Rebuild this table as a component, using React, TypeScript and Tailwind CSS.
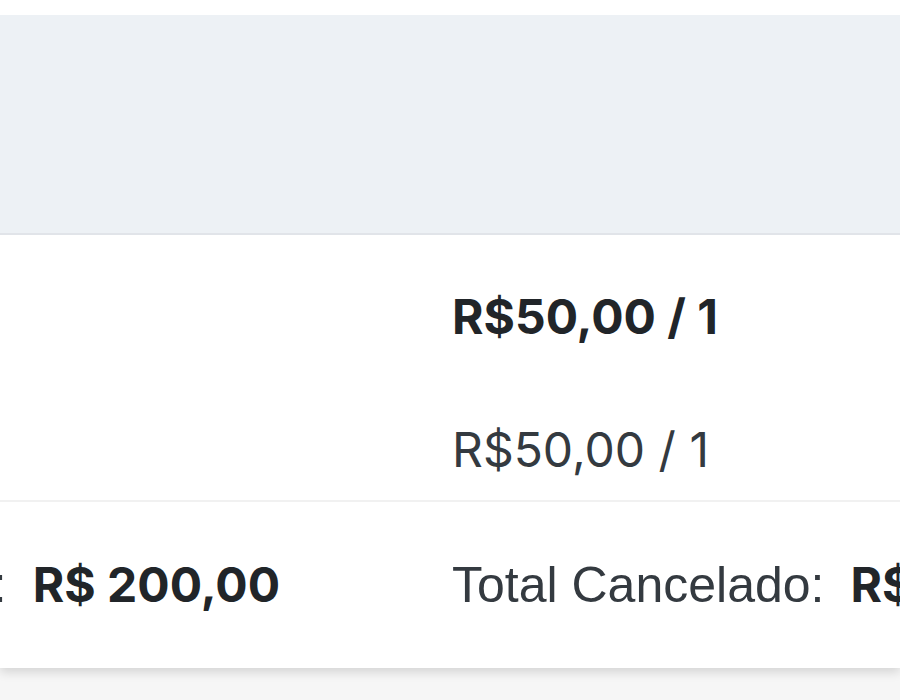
import React from 'react';

const inter = { fontFamily: 'Inter, "Noto Sans", sans-serif' };

export default function App() {
  return (
    <div className="w-[900px] h-[700px] overflow-hidden bg-[#f6f6f6]">
      <div className="bg-white pt-[15px] shadow-[0_4px_10px_rgba(0,0,0,0.14)]">
        {/* cabeçalho da tabela */}
        <div className="h-[220px] bg-[#edf1f5] border-b-2 border-[#e1e4e9]" />

        {/* linhas */}
        <div className="grid grid-cols-[452px_1fr] text-[48px] leading-[48px] text-[#212529]" style={inter}>
          <div />
          <div className="pt-[58px] font-bold whitespace-nowrap">R$50,00 / 1</div>
          <div />
          <div className="pt-[85px] pb-[26px] text-[#343a40] whitespace-nowrap">R$50,00 / 1</div>
        </div>

        {/* totais */}
        <div
          className="border-t-2 border-[#f1f1f1] grid grid-cols-[280px_172px_1fr] pt-[58px] pb-[58px] text-[50px] leading-[50px] text-[#212529]"
          style={{ fontFamily: '"Liberation Sans", Arial, sans-serif' }}
        >
          <div className="flex items-baseline justify-end whitespace-nowrap">
            <span className="text-[#343a40]">Total Pago:</span>
            <span className="ml-[26px] font-bold text-[48px]" style={inter}>R$ 200,00</span>
          </div>
          <div />
          <div className="flex items-baseline whitespace-nowrap">
            <span className="text-[#343a40]">Total Cancelado:</span>
            <span className="ml-[26px] font-bold text-[48px]" style={inter}>R$ 0,00</span>
          </div>
        </div>
      </div>
    </div>
  );
}
